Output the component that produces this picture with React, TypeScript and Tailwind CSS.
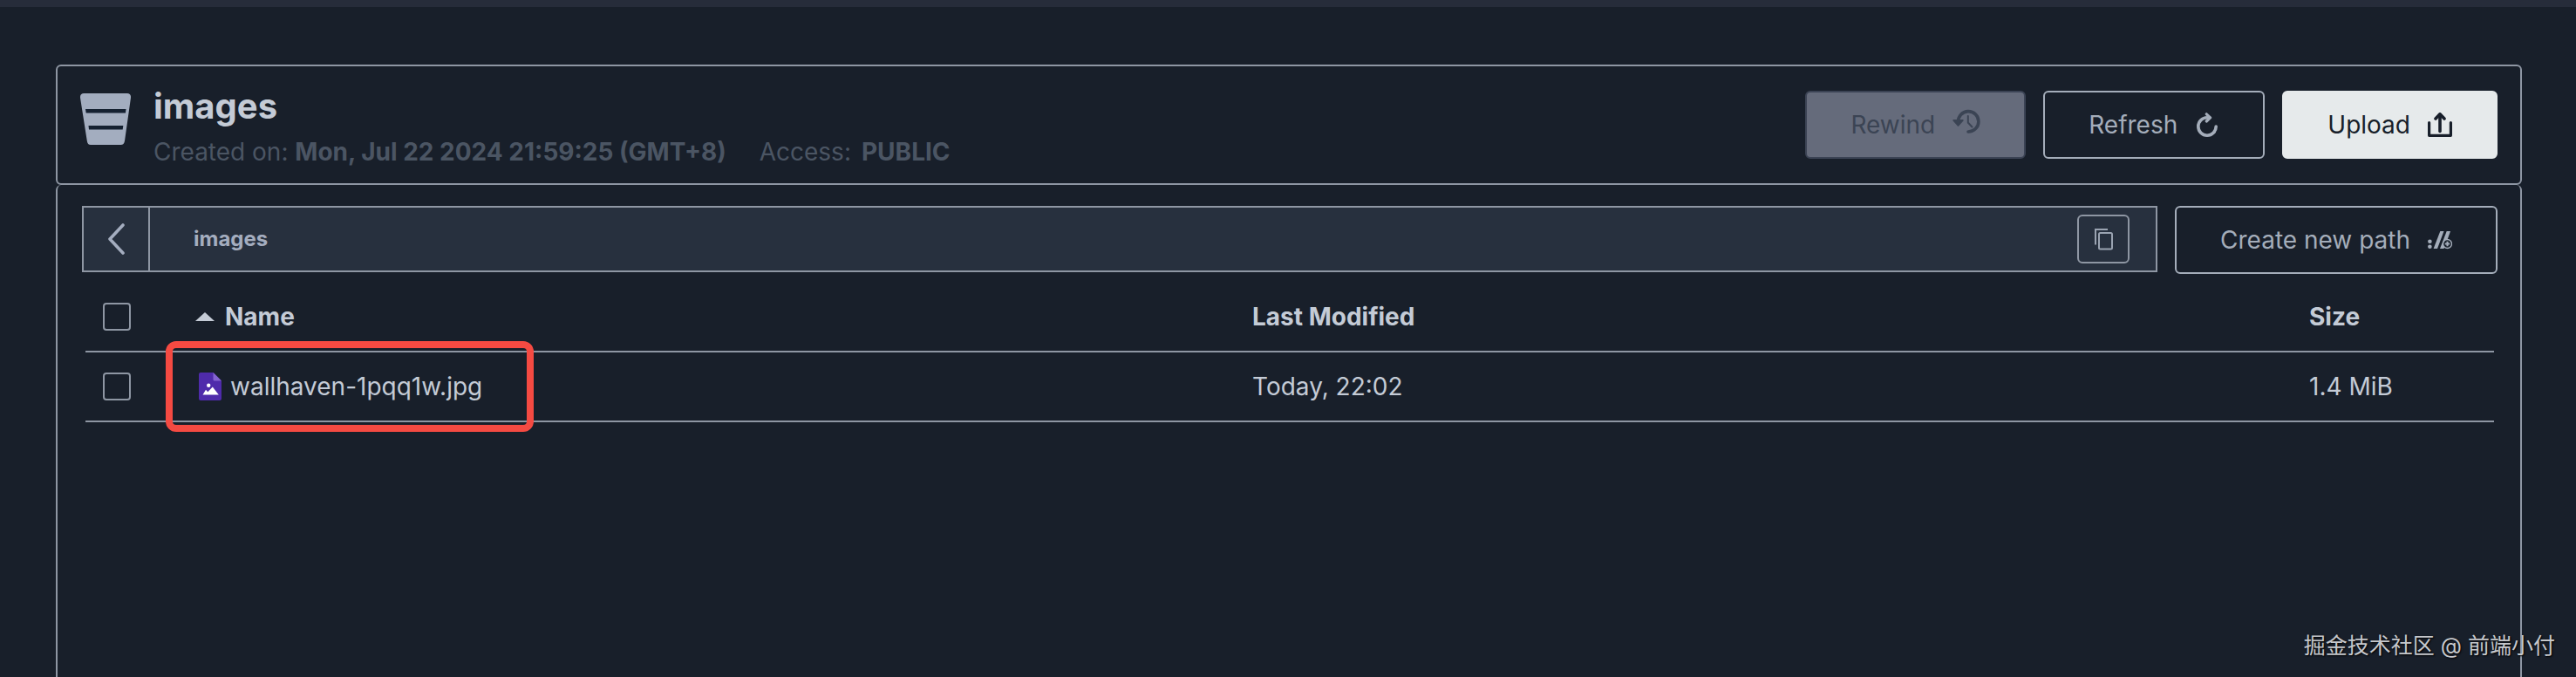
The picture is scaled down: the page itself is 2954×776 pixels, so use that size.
import type { ReactNode } from "react";

const buttonBase =
  "flex h-[78px] shrink-0 items-center gap-5 rounded-md border-2 px-[50px] text-[28px] leading-10 whitespace-nowrap";

function BucketIcon() {
  return (
    <svg viewBox="0 0 58 59" className="mt-[15px] h-[59px] w-[58px] shrink-0" aria-hidden="true">
      <path
        d="M4 0H54C56.800 0 58.300 2 58 5L51 54.500C50.500 57.500 49 59 46.500 59H12C9.500 59 8.200 57.500 7.800 54.500L0 5C-.3 2 1.300 0 4 0Z"
        fill="#a3adbf"
      />
      <path d="M6 18H52.500L52 22.500H6.700ZM9.500 37H49.300L48.700 41.500H10Z" fill="#152131" />
    </svg>
  );
}

function RewindIcon() {
  return (
    <svg viewBox="0 0 32 28" className="h-7 w-8 -translate-y-1" fill="none" stroke="currentColor" aria-hidden="true">
      <path d="M6.500 15A11.700 11.700 0 1 1 18 26" strokeWidth="3.600" strokeLinecap="round" />
      <path d="M1.200 13L6.500 18.800L11.800 13Z" fill="currentColor" strokeWidth="1.800" strokeLinejoin="round" />
      <path d="M17.800 8V15.500L22.500 20.500" strokeWidth="2" strokeLinecap="round" />
    </svg>
  );
}

function RefreshIcon() {
  return (
    <svg viewBox="0 0 28 28" className="size-7" fill="none" stroke="currentColor" aria-hidden="true">
      <path d="M24.200 16A10.200 10.200 0 1 1 14 5.800H16" strokeWidth="3.600" strokeLinecap="round" />
      <path d="M13.300 1.800L17.600 5.900L13.300 10" strokeWidth="3.200" strokeLinecap="round" strokeLinejoin="round" />
    </svg>
  );
}

function UploadIcon() {
  return (
    <svg viewBox="0 0 28 28" className="size-7" fill="none" stroke="currentColor" aria-hidden="true">
      <path
        d="M1.600 11.500V26.300H26.400V11.500"
        strokeWidth="3.200"
        strokeLinecap="round"
        strokeLinejoin="round"
      />
      <path d="M14 2.500V21.500" strokeWidth="3.600" strokeLinecap="round" />
      <path d="M9 7L14 1.800L19 7" strokeWidth="3.600" strokeLinecap="round" strokeLinejoin="round" />
    </svg>
  );
}

function NewPathIcon() {
  return (
    <svg viewBox="0 0 28 28" className="size-7" aria-hidden="true">
      <g fill="currentColor">
        <circle cx="2.400" cy="15.800" r="2.300" />
        <circle cx="2.400" cy="21.700" r="2.300" />
        <path d="M14.300 4H18.500L11 24H6.600Z" />
        <path d="M21.700 4H26L23.500 11L18.500 24H14Z" />
      </g>
      <circle cx="22.500" cy="18.500" r="5" className="fill-[#181f2a]" stroke="currentColor" strokeWidth="1.400" />
      <path d="M22.500 15.800V21.200M19.800 18.500H25.200" stroke="currentColor" strokeWidth="2" />
    </svg>
  );
}

function BackIcon() {
  return (
    <svg viewBox="0 0 20 36" className="h-9 w-5" fill="none" stroke="currentColor" aria-hidden="true">
      <path d="M18 2L3 18L18 34" strokeWidth="3.600" strokeLinecap="round" strokeLinejoin="round" />
    </svg>
  );
}

function CopyIcon() {
  return (
    <svg viewBox="0 0 22 26" className="h-[26px] w-[22px]" fill="none" stroke="currentColor" strokeWidth="2" aria-hidden="true">
      <path d="M16 2H2V19.500" />
      <rect x="6" y="6" width="15" height="18.500" rx="1.500" />
    </svg>
  );
}

function ImageFileIcon() {
  return (
    <svg viewBox="0 0 26 32" className="h-8 w-[26px]" aria-hidden="true">
      <path d="M2 0H16.500L26 9.500V30A2 2 0 0 1 24 32H2A2 2 0 0 1 0 30V2A2 2 0 0 1 2 0Z" fill="#4f2bab" />
      <path d="M16.500 0L26 9.500H18A1.500 1.500 0 0 1 16.500 8Z" fill="#8464d0" />
      <circle cx="11.200" cy="14.800" r="2.200" fill="#fff" />
      <path d="M4.500 25.500L8 19.800L10.300 22.300L15.800 16.500L22.800 25.500Z" fill="#fff" />
    </svg>
  );
}

function SelectBox({ label }: { label: string }) {
  return (
    <input
      type="checkbox"
      aria-label={label}
      className="ml-5 block size-8 appearance-none rounded border-2 border-[#8e96a3] checked:bg-[#8e96a3]"
    />
  );
}

function HeadCell({ children }: { children: ReactNode }) {
  return (
    <th scope="col" className="h-20 border-b-2 border-[#8e96a3] p-0 text-left font-bold">
      {children}
    </th>
  );
}

function Cell({ children }: { children: ReactNode }) {
  return <td className="h-20 border-b-2 border-[#8e96a3] p-0">{children}</td>;
}

export default function App() {
  return (
    <div className="relative flex min-h-screen flex-col overflow-hidden bg-[#181f2a] font-['Inter','Noto_Sans_CJK_SC',sans-serif] text-[#c4cbd6]">
      <div className="h-2 bg-[#262c3a]" />
      <main className="flex grow flex-col pt-[66px] pr-[62px] pl-16">
        <header className="flex h-[138px] items-center justify-between rounded-md border-2 border-[#8e96a3] px-[26px]">
          <div className="flex items-start gap-[26px]">
            <BucketIcon />
            <div className="flex flex-col gap-1 pt-0.5">
              <h1 className="text-[40px] leading-14 font-bold">images</h1>
              <div className="flex gap-[38px] text-[28px] leading-10 whitespace-nowrap text-[#4b5563]">
                <p>
                  Created on: <strong>Mon, Jul 22 2024 21:59:25 (GMT+8)</strong>
                </p>
                <p className="flex gap-3">
                  Access: <strong>PUBLIC</strong>
                </p>
              </div>
            </div>
          </div>
          <div className="flex gap-5">
            <button type="button" disabled className={`${buttonBase} border-[#3b4354] bg-[#656b7b] text-[#3b4454]`}>
              Rewind
              <RewindIcon />
            </button>
            <button type="button" className={`${buttonBase} border-[#a4adba] text-[#a4adba]`}>
              Refresh
              <RefreshIcon />
            </button>
            <button type="button" className={`${buttonBase} border-[#e6eaeb] bg-[#e6eaeb] text-[#181f2a]`}>
              Upload
              <UploadIcon />
            </button>
          </div>
        </header>

        <section className="grow rounded-t-md border-x-2 border-[#8e96a3] pt-6 pr-[26px] pl-7">
          <div className="flex items-start gap-5">
            <nav
              aria-label="Path"
              className="flex h-[76px] grow items-center border-2 border-[#8e96a3] bg-[#27303e] text-[#a4adbf]"
            >
              <button
                type="button"
                aria-label="Back"
                className="flex h-full w-[76px] items-center justify-center border-r-2 border-[#8e96a3]"
              >
                <BackIcon />
              </button>
              <a href="#images" className="ml-[50px] text-2xl font-bold">
                images
              </a>
              <button
                type="button"
                aria-label="Copy path"
                className="mr-[30px] ml-auto flex h-14 w-[60px] items-center justify-center rounded-md border-2 border-[#8e96a3] text-[#9aa3b1]"
              >
                <CopyIcon />
              </button>
            </nav>
            <button type="button" className={`${buttonBase} border-[#a4adba] text-[#a4adba]`}>
              Create new path
              <NewPathIcon />
            </button>
          </div>

          <div className="mt-2.5 px-1">
            <table className="w-full table-fixed border-separate border-spacing-0 text-[28px] leading-10 whitespace-nowrap">
              <colgroup>
                <col className="w-[126px]" />
                <col />
                <col />
                <col className="w-[212px]" />
              </colgroup>
              <thead>
                <tr>
                  <HeadCell>
                    <SelectBox label="Select all" />
                  </HeadCell>
                  <HeadCell>
                    <span className="flex items-center gap-3">
                      <svg viewBox="0 0 22 10" className="h-2.5 w-[22px]" aria-hidden="true">
                        <path d="M11 0L22 10H0Z" fill="currentColor" />
                      </svg>
                      Name
                    </span>
                  </HeadCell>
                  <HeadCell>Last Modified</HeadCell>
                  <HeadCell>Size</HeadCell>
                </tr>
              </thead>
              <tbody>
                <tr>
                  <Cell>
                    <SelectBox label="Select wallhaven-1pqq1w.jpg" />
                  </Cell>
                  <Cell>
                    <span className="relative flex items-center gap-2.5 pl-1">
                      <ImageFileIcon />
                      wallhaven-1pqq1w.jpg
                      <span className="pointer-events-none absolute top-1/2 -left-[34px] h-[104px] w-[422px] -translate-y-1/2 rounded-xl border-8 border-[#f54a42]" />
                    </span>
                  </Cell>
                  <Cell>Today, 22:02</Cell>
                  <Cell>1.4 MiB</Cell>
                </tr>
              </tbody>
            </table>
          </div>
        </section>
      </main>
      <p className="absolute right-6 bottom-4 text-[25px] leading-10 text-[#c6c8cc] [text-shadow:1px_1px_2px_#000]">
        掘金技术社区 @ 前端小付
      </p>
    </div>
  );
}
